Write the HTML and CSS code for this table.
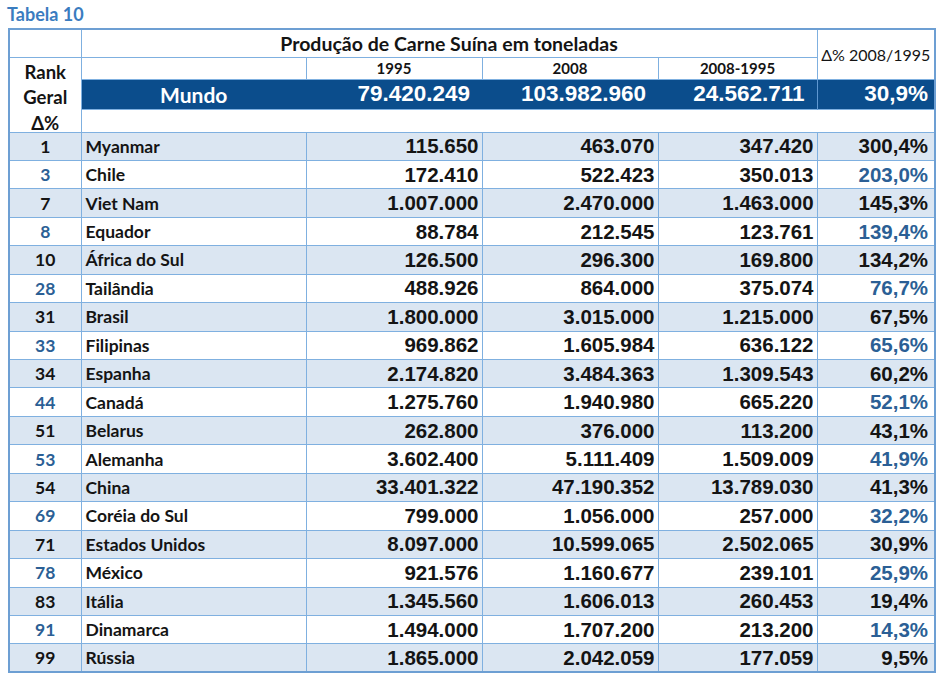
FILE: index.html
```html
<!DOCTYPE html>
<html lang="pt">
<head>
<meta charset="utf-8">
<title>Tabela 10</title>
<link rel="stylesheet" href="styles.css">
</head>
<body>
<div class="caption">Tabela 10</div>
<table class="tbl">
  <colgroup>
    <col class="c-rank"><col class="c-name"><col class="c-num"><col class="c-num"><col class="c-diff"><col class="c-pct">
  </colgroup>
  <thead>
    <tr class="h1">
      <th class="empty"></th>
      <th colspan="4" class="title">Produção de Carne Suína em toneladas</th>
      <th rowspan="2" class="pcthead">Δ% 2008/1995</th>
    </tr>
    <tr class="h2">
      <th rowspan="3" class="rankhead"><div class="rankbox">Rank<br>Geral<br>Δ%</div></th>
      <th class="empty"></th>
      <th class="year">1995</th>
      <th class="year">2008</th>
      <th class="year">2008-1995</th>
    </tr>
    <tr class="world">
      <th class="wname">Mundo</th>
      <td class="wnum">79.420.249</td>
      <td class="wnum">103.982.960</td>
      <td class="wnum">24.562.711</td>
      <td class="wnum wpct">30,9%</td>
    </tr>
    <tr class="blank"><td colspan="5"></td></tr>
  </thead>
  <tbody>
    <tr class="odd"><td class="rank">1</td><td class="name">Myanmar</td><td class="num">115.650</td><td class="num">463.070</td><td class="num">347.420</td><td class="pct">300,4%</td></tr>
    <tr class="even"><td class="rank">3</td><td class="name">Chile</td><td class="num">172.410</td><td class="num">522.423</td><td class="num">350.013</td><td class="pct">203,0%</td></tr>
    <tr class="odd"><td class="rank">7</td><td class="name">Viet Nam</td><td class="num">1.007.000</td><td class="num">2.470.000</td><td class="num">1.463.000</td><td class="pct">145,3%</td></tr>
    <tr class="even"><td class="rank">8</td><td class="name">Equador</td><td class="num">88.784</td><td class="num">212.545</td><td class="num">123.761</td><td class="pct">139,4%</td></tr>
    <tr class="odd"><td class="rank">10</td><td class="name">África do Sul</td><td class="num">126.500</td><td class="num">296.300</td><td class="num">169.800</td><td class="pct">134,2%</td></tr>
    <tr class="even"><td class="rank">28</td><td class="name">Tailândia</td><td class="num">488.926</td><td class="num">864.000</td><td class="num">375.074</td><td class="pct">76,7%</td></tr>
    <tr class="odd"><td class="rank">31</td><td class="name">Brasil</td><td class="num">1.800.000</td><td class="num">3.015.000</td><td class="num">1.215.000</td><td class="pct">67,5%</td></tr>
    <tr class="even"><td class="rank">33</td><td class="name">Filipinas</td><td class="num">969.862</td><td class="num">1.605.984</td><td class="num">636.122</td><td class="pct">65,6%</td></tr>
    <tr class="odd"><td class="rank">34</td><td class="name">Espanha</td><td class="num">2.174.820</td><td class="num">3.484.363</td><td class="num">1.309.543</td><td class="pct">60,2%</td></tr>
    <tr class="even"><td class="rank">44</td><td class="name">Canadá</td><td class="num">1.275.760</td><td class="num">1.940.980</td><td class="num">665.220</td><td class="pct">52,1%</td></tr>
    <tr class="odd"><td class="rank">51</td><td class="name">Belarus</td><td class="num">262.800</td><td class="num">376.000</td><td class="num">113.200</td><td class="pct">43,1%</td></tr>
    <tr class="even"><td class="rank">53</td><td class="name">Alemanha</td><td class="num">3.602.400</td><td class="num">5.111.409</td><td class="num">1.509.009</td><td class="pct">41,9%</td></tr>
    <tr class="odd"><td class="rank">54</td><td class="name">China</td><td class="num">33.401.322</td><td class="num">47.190.352</td><td class="num">13.789.030</td><td class="pct">41,3%</td></tr>
    <tr class="even"><td class="rank">69</td><td class="name">Coréia do Sul</td><td class="num">799.000</td><td class="num">1.056.000</td><td class="num">257.000</td><td class="pct">32,2%</td></tr>
    <tr class="odd"><td class="rank">71</td><td class="name">Estados Unidos</td><td class="num">8.097.000</td><td class="num">10.599.065</td><td class="num">2.502.065</td><td class="pct">30,9%</td></tr>
    <tr class="even"><td class="rank">78</td><td class="name">México</td><td class="num">921.576</td><td class="num">1.160.677</td><td class="num">239.101</td><td class="pct">25,9%</td></tr>
    <tr class="odd"><td class="rank">83</td><td class="name">Itália</td><td class="num">1.345.560</td><td class="num">1.606.013</td><td class="num">260.453</td><td class="pct">19,4%</td></tr>
    <tr class="even"><td class="rank">91</td><td class="name">Dinamarca</td><td class="num">1.494.000</td><td class="num">1.707.200</td><td class="num">213.200</td><td class="pct">14,3%</td></tr>
    <tr class="odd"><td class="rank">99</td><td class="name">Rússia</td><td class="num">1.865.000</td><td class="num">2.042.059</td><td class="num">177.059</td><td class="pct">9,5%</td></tr>
  </tbody>
</table>
</body>
</html>
```
FILE: styles.css
```css
html, body {
  margin: 0;
  padding: 0;
  background: #ffffff;
}
body {
  padding: 3px 0 0 8px;
  font-family: Lato, "Open Sans", "Liberation Sans", sans-serif;
  color: #141414;
}
.caption {
  font-family: Lato, "Open Sans", sans-serif;
  font-weight: 700;
  font-size: 18px;
  line-height: 22px;
  color: #3a7cbf;
  margin-left: -1px;
  margin-bottom: 3px;
}
.tbl {
  border-collapse: collapse;
  table-layout: fixed;
  width: 926px;
  border: 2px solid #6d9fd3;
}
.c-rank { width: 72px; }
.c-name { width: 225px; }
.c-num { width: 176px; }
.c-diff { width: 159px; }
.c-pct { width: 118px; }

.tbl th, .tbl td {
  padding: 0;
  border: 1px solid #7fb0e0;
  white-space: nowrap;
  overflow: hidden;
}
.h1 { height: 28px; }
.h1 .title {
  font-size: 19.5px;
  line-height: 22px;
  font-weight: 700;
  text-align: center;
  vertical-align: middle;
  padding-top: 2px;
  border-bottom: 1px solid #7fb0e0;
}
.pcthead {
  font-size: 16px;
  font-weight: 400;
  text-align: center;
  vertical-align: middle;
}
.h2 { height: 22px; }
.year {
  font-size: 15px;
  line-height: 18px;
  font-weight: 700;
  text-align: center;
  vertical-align: middle;
  padding-top: 2px;
}
.rankhead {
  text-align: center;
  vertical-align: top;
  padding-top: 2px !important;
}
.rankbox {
  height: 72px;
  overflow: visible;
  font-size: 18.5px;
  font-weight: 700;
  line-height: 25.5px;
}
.world { height: 30px; background: #0b4d8c; }
.world th, .world td {
  border: none;
  border-top: 1px solid #0a2e55;
  color: #ffffff;
}
.wname {
  font-size: 21px;
  font-weight: 700;
  text-align: center;
  vertical-align: middle;
}
.wnum {
  font-family: "Liberation Sans", Arial, sans-serif;
  font-weight: 700;
  font-size: 22.5px;
  text-align: right;
  padding-right: 12px !important;
  vertical-align: middle;
}
.world .wpct {
  border-left: 1px solid #5f98d2;
  padding-right: 6px !important;
}
.blank { height: 23px; }
.blank td { border-left: 1px solid #7fb0e0; border-right: 2px solid #6d9fd3; }

tbody tr { height: 28.45px; }
tbody tr.odd { background: #dbe6f2; }
tbody tr.even { background: #ffffff; }
.rank {
  font-size: 17.5px;
  font-weight: 700;
  text-align: center;
  vertical-align: middle;
}
.name {
  font-size: 17.5px;
  font-weight: 700;
  text-align: left;
  padding-left: 4px !important;
  vertical-align: middle;
}
.num, .pct {
  font-family: "Liberation Sans", Arial, sans-serif;
  font-weight: 700;
  font-size: 20.5px;
  text-align: right;
  padding-right: 3px !important;
  vertical-align: middle;
}
.pct { padding-right: 6px !important; }
tr.even .rank, tr.even .pct { color: #2b5f95; }
```
